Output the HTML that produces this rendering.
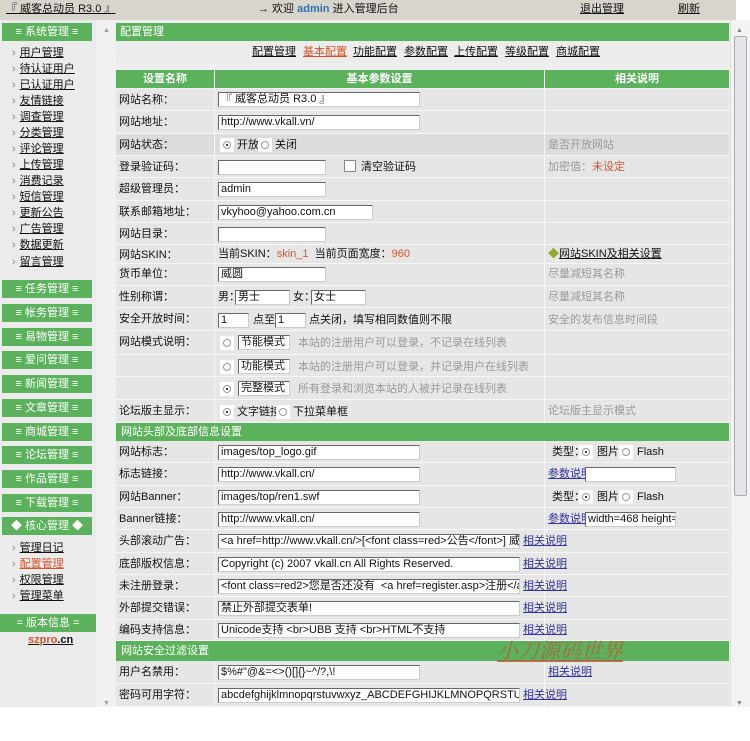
<!DOCTYPE html>
<html><head><meta charset="utf-8">
<style>
*{margin:0;padding:0;box-sizing:border-box}
body{width:750px;height:741px;background:#fff;position:relative;overflow:hidden;font:11px/13px "Liberation Sans","WenQuanYi Zen Hei","Noto Sans CJK SC",sans-serif;color:#111}
.a{position:absolute;white-space:nowrap;line-height:13px}
.u{text-decoration:underline}
.g{background:#5cb15c;color:#fff}
.sh{position:absolute;left:2px;width:90px;height:18px;line-height:18px;text-align:center;color:#fff;background:#5cb15c;font-size:11px}
.sl{position:absolute;left:12px;line-height:14px;font-size:11px}
.sl:before{content:"›";color:#888;margin-right:4px}
.sl span{text-decoration:underline}
.row{position:absolute;left:116px;width:613px;background:#e6e6e6;border-bottom:1px solid #f6f6f6}
.row .c1,.row .c2{position:absolute;top:0;bottom:0;border-right:1px solid #f6f6f6}
.row .c1{left:0;width:99px}
.row .c2{left:99px;width:330px}
.lb{position:absolute;left:3px;line-height:20px;font-size:11px;white-space:nowrap}
.in{position:absolute;height:15px;background:#fff;border:1px solid;border-color:#666 #ccc #ccc #666;font-size:11px;line-height:13px;padding-left:2px;white-space:nowrap;overflow:hidden}
.rd{position:absolute;width:14px;height:14px;background:#fff;}
.rd i{position:absolute;left:3px;top:3px;width:8px;height:8px;border-radius:50%;border:1px solid #999;}
.rd.on i:after{content:"";position:absolute;left:2px;top:2px;width:2px;height:2px;background:#000;border-radius:50%}
.gr{color:#999}
.lk{color:#33339a;text-decoration:underline}
.red{color:#d9532b}
</style></head><body>
<div class="a" style="left:0;top:0;width:736px;height:20px;background:#d8d5cd"></div>
<div class="a u" style="left:6px;top:3px">『 威客总动员 R3.0 』</div>
<div class="a" style="left:258px;top:3px">→ 欢迎 <b style="color:#2f6fb3">admin</b> 进入管理后台</div>
<div class="a u" style="left:580px;top:3px">退出管理</div>
<div class="a u" style="left:678px;top:3px">刷新</div>
<div class="a" style="left:0;top:20px;width:96px;height:687px;background:#ebebeb"></div>
<div class="a" style="left:96px;top:20px;width:19px;height:687px;background:#f1f1f1"></div>
<div class="a" style="left:103px;top:24px;color:#999;font-size:7px">▲</div>
<div class="a" style="left:103px;top:697px;color:#999;font-size:7px">▼</div>
<div class="sh" style="top:23px">≡ 系统管理 ≡</div>
<div class="sl" style="top:46px"><span>用户管理</span></div>
<div class="sl" style="top:62px"><span>待认证用户</span></div>
<div class="sl" style="top:78px"><span>已认证用户</span></div>
<div class="sl" style="top:94px"><span>友情链接</span></div>
<div class="sl" style="top:110px"><span>调查管理</span></div>
<div class="sl" style="top:126px"><span>分类管理</span></div>
<div class="sl" style="top:142px"><span>评论管理</span></div>
<div class="sl" style="top:158px"><span>上传管理</span></div>
<div class="sl" style="top:174px"><span>消费记录</span></div>
<div class="sl" style="top:190px"><span>短信管理</span></div>
<div class="sl" style="top:206px"><span>更新公告</span></div>
<div class="sl" style="top:222px"><span>广告管理</span></div>
<div class="sl" style="top:238px"><span>数据更新</span></div>
<div class="sl" style="top:255px"><span>留言管理</span></div>
<div class="sh" style="top:280px">≡ 任务管理 ≡</div>
<div class="sh" style="top:304px">≡ 帐务管理 ≡</div>
<div class="sh" style="top:328px">≡ 易物管理 ≡</div>
<div class="sh" style="top:351px">≡ 爱问管理 ≡</div>
<div class="sh" style="top:375px">≡ 新闻管理 ≡</div>
<div class="sh" style="top:399px">≡ 文章管理 ≡</div>
<div class="sh" style="top:423px">≡ 商城管理 ≡</div>
<div class="sh" style="top:446px">≡ 论坛管理 ≡</div>
<div class="sh" style="top:470px">≡ 作品管理 ≡</div>
<div class="sh" style="top:494px">≡ 下载管理 ≡</div>
<div class="sh" style="top:517px">◆ 核心管理 ◆</div>
<div class="sl" style="top:541px"><span>管理日记</span></div>
<div class="sl" style="top:557px"><span class="red">配置管理</span></div>
<div class="sl" style="top:573px"><span>权限管理</span></div>
<div class="sl" style="top:589px"><span>管理菜单</span></div>
<div class="sh" style="top:614px;left:0;width:96px">= 版本信息 =</div>
<div class="a" style="left:28px;top:634px;font-weight:bold;text-decoration:underline"><span class="red">szpro</span>.cn</div>
<div class="a" style="left:115px;top:20px;width:615px;height:687px;background:#efefef"></div>
<div class="a g" style="left:116px;top:23px;width:613px;height:18px;line-height:18px;padding-left:4px">配置管理</div>
<div class="a" style="left:116px;top:41px;width:613px;height:22px;background:#ececec"></div>
<div class="a u" style="left:252px;top:46px">配置管理</div>
<div class="a u red" style="left:303px;top:46px">基本配置</div>
<div class="a u" style="left:353px;top:46px">功能配置</div>
<div class="a u" style="left:404px;top:46px">参数配置</div>
<div class="a u" style="left:454px;top:46px">上传配置</div>
<div class="a u" style="left:505px;top:46px">等级配置</div>
<div class="a u" style="left:556px;top:46px">商城配置</div>
<div class="a g" style="left:116px;top:70px;width:98px;height:18px;line-height:18px;text-align:center;font-weight:bold">设置名称</div>
<div class="a g" style="left:215px;top:70px;width:329px;height:18px;line-height:18px;text-align:center;font-weight:bold">基本参数设置</div>
<div class="a g" style="left:545px;top:70px;width:184px;height:18px;line-height:18px;text-align:center;font-weight:bold">相关说明</div>

<div class="row" style="top:89px;height:22px"><div class="c1"></div><div class="c2"></div><div class="lb" style="top:1px">网站名称：</div><div class="in" style="left:102px;top:3px;width:202px">『 威客总动员 R3.0 』</div></div>
<div class="row" style="top:111px;height:23px"><div class="c1"></div><div class="c2"></div><div class="lb" style="top:1px">网站地址：</div><div class="in" style="left:102px;top:4px;width:202px">http://www.vkall.vn/</div></div>
<div class="row" style="top:134px;height:22px;background:#dcdcdc"><div class="c1"></div><div class="c2"></div><div class="lb" style="top:1px">网站状态：</div><div class="rd on" style="left:104px;top:4px"><i></i></div><div class="a" style="left:121px;top:5px">开放</div><div class="rd" style="left:142px;top:4px"><i></i></div><div class="a" style="left:159px;top:5px">关闭</div><div class="a gr" style="left:432px;top:5px">是否开放网站</div></div>
<div class="row" style="top:156px;height:22px"><div class="c1"></div><div class="c2"></div><div class="lb" style="top:1px">登录验证码：</div><div class="in" style="left:102px;top:4px;width:108px"></div><div class="a" style="left:228px;top:4px;width:12px;height:12px;background:#fff;border:1px solid #888"></div><div class="a" style="left:245px;top:5px">清空验证码</div><div class="a gr" style="left:432px;top:5px">加密值：<span class="red">未设定</span></div></div>
<div class="row" style="top:178px;height:23px"><div class="c1"></div><div class="c2"></div><div class="lb" style="top:1px">超级管理员：</div><div class="in" style="left:102px;top:4px;width:108px">admin</div></div>
<div class="row" style="top:201px;height:22px"><div class="c1"></div><div class="c2"></div><div class="lb" style="top:1px">联系邮箱地址：</div><div class="in" style="left:102px;top:4px;width:155px">vkyhoo@yahoo.com.cn</div></div>
<div class="row" style="top:223px;height:22px"><div class="c1"></div><div class="c2"></div><div class="lb" style="top:1px">网站目录：</div><div class="in" style="left:102px;top:4px;width:108px"></div></div>
<div class="row" style="top:245px;height:19px"><div class="c1"></div><div class="c2"></div><div class="lb" style="top:0">网站SKIN：</div><div class="a" style="left:102px;top:3px">当前SKIN：<span class="red">skin_1</span>&nbsp; 当前页面宽度：<span class="red">960</span></div><div class="a" style="left:432px;top:3px"><span style="color:#9a3">◆</span><span class="u">网站SKIN及相关设置</span></div></div>
<div class="row" style="top:264px;height:22px"><div class="c1"></div><div class="c2"></div><div class="lb" style="top:0">货币单位：</div><div class="in" style="left:102px;top:3px;width:108px">威圆</div><div class="a gr" style="left:432px;top:4px">尽量减短其名称</div></div>
<div class="row" style="top:286px;height:22px"><div class="c1"></div><div class="c2"></div><div class="lb" style="top:1px">性别称谓：</div><div class="a" style="left:102px;top:5px">男：</div><div class="in" style="left:119px;top:4px;width:55px">男士</div><div class="a" style="left:177px;top:5px">女：</div><div class="in" style="left:195px;top:4px;width:55px">女士</div><div class="a gr" style="left:432px;top:5px">尽量减短其名称</div></div>
<div class="row" style="top:308px;height:23px"><div class="c1"></div><div class="c2"></div><div class="lb" style="top:1px">安全开放时间：</div><div class="in" style="left:102px;top:5px;width:31px">1</div><div class="a" style="left:137px;top:6px">点至</div><div class="in" style="left:159px;top:5px;width:31px">1</div><div class="a" style="left:193px;top:6px">点关闭，填写相同数值则不限</div><div class="a gr" style="left:432px;top:6px">安全的发布信息时间段</div></div>
<div class="row" style="top:331px;height:24px"><div class="c1"></div><div class="c2"></div><div class="lb" style="top:1px">网站模式说明：</div><div class="rd" style="left:104px;top:5px"><i></i></div><div class="in" style="left:122px;top:4px;width:52px">节能模式</div><div class="a gr" style="left:182px;top:6px">本站的注册用户可以登录，不记录在线列表</div></div>
<div class="row" style="top:355px;height:22px"><div class="c1"></div><div class="c2"></div><div class="rd" style="left:104px;top:5px"><i></i></div><div class="in" style="left:122px;top:4px;width:52px">功能模式</div><div class="a gr" style="left:182px;top:6px">本站的注册用户可以登录，并记录用户在线列表</div></div>
<div class="row" style="top:377px;height:23px"><div class="c1"></div><div class="c2"></div><div class="rd on" style="left:104px;top:5px"><i></i></div><div class="in" style="left:122px;top:4px;width:52px">完整模式</div><div class="a gr" style="left:182px;top:6px">所有登录和浏览本站的人被并记录在线列表</div></div>
<div class="row" style="top:400px;height:23px"><div class="c1"></div><div class="c2"></div><div class="lb" style="top:1px">论坛版主显示：</div><div class="rd on" style="left:104px;top:5px"><i></i></div><div class="a" style="left:121px;top:6px">文字链接</div><div class="rd" style="left:160px;top:5px"><i></i></div><div class="a" style="left:177px;top:6px">下拉菜单框</div><div class="a gr" style="left:432px;top:5px">论坛版主显示模式</div></div>
<div class="a g" style="left:116px;top:423px;width:613px;height:18px;line-height:18px;padding-left:5px">网站头部及底部信息设置</div>

<div class="row" style="top:441px;height:22px"><div class="c1"></div><div class="c2"></div><div class="lb" style="top:1px">网站标志：</div><div class="in" style="left:102px;top:4px;width:202px">images/top_logo.gif</div><div class="a" style="left:436px;top:5px">类型：</div><div class="rd on" style="left:463px;top:4px"><i></i></div><div class="a" style="left:481px;top:5px">图片</div><div class="rd" style="left:503px;top:4px"><i></i></div><div class="a" style="left:521px;top:5px">Flash</div></div>
<div class="row" style="top:463px;height:23px"><div class="c1"></div><div class="c2"></div><div class="lb" style="top:1px">标志链接：</div><div class="in" style="left:102px;top:4px;width:202px">http://www.vkall.cn/</div><div class="a lk" style="left:432px;top:5px">参数说明</div><div class="in" style="left:469px;top:4px;width:91px"></div></div>
<div class="row" style="top:486px;height:22px"><div class="c1"></div><div class="c2"></div><div class="lb" style="top:1px">网站Banner：</div><div class="in" style="left:102px;top:4px;width:202px">images/top/ren1.swf</div><div class="a" style="left:436px;top:5px">类型：</div><div class="rd on" style="left:463px;top:4px"><i></i></div><div class="a" style="left:481px;top:5px">图片</div><div class="rd" style="left:503px;top:4px"><i></i></div><div class="a" style="left:521px;top:5px">Flash</div></div>
<div class="row" style="top:508px;height:22px"><div class="c1"></div><div class="c2"></div><div class="lb" style="top:1px">Banner链接：</div><div class="in" style="left:102px;top:4px;width:202px">http://www.vkall.cn/</div><div class="a lk" style="left:432px;top:5px">参数说明</div><div class="in" style="left:469px;top:4px;width:91px">width=468 height=60</div></div>
<div class="row" style="top:530px;height:23px"><div class="c1"></div><div class="c2"></div><div class="lb" style="top:1px">头部滚动广告：</div><div class="in" style="left:102px;top:4px;width:302px">&lt;a href=http://www.vkall.cn/&gt;[&lt;font class=red&gt;公告&lt;/font&gt;] 威客</div><div class="a lk" style="left:407px;top:5px">相关说明</div></div>
<div class="row" style="top:553px;height:22px"><div class="c1"></div><div class="c2"></div><div class="lb" style="top:1px">底部版权信息：</div><div class="in" style="left:102px;top:4px;width:302px">Copyright (c) 2007 vkall.cn All Rights Reserved.</div><div class="a lk" style="left:407px;top:5px">相关说明</div></div>
<div class="row" style="top:575px;height:22px"><div class="c1"></div><div class="c2"></div><div class="lb" style="top:1px">未注册登录：</div><div class="in" style="left:102px;top:4px;width:302px">&lt;font class=red2&gt;您是否还没有 &nbsp;&lt;a href=register.asp&gt;注册&lt;/a&gt;</div><div class="a lk" style="left:407px;top:5px">相关说明</div></div>
<div class="row" style="top:597px;height:23px"><div class="c1"></div><div class="c2"></div><div class="lb" style="top:1px">外部提交错误：</div><div class="in" style="left:102px;top:4px;width:302px">禁止外部提交表单!</div><div class="a lk" style="left:407px;top:5px">相关说明</div></div>
<div class="row" style="top:620px;height:21px"><div class="c1"></div><div class="c2"></div><div class="lb" style="top:0">编码支持信息：</div><div class="in" style="left:102px;top:3px;width:302px">Unicode支持 &lt;br&gt;UBB 支持 &lt;br&gt;HTML不支持</div><div class="a lk" style="left:407px;top:4px">相关说明</div></div>
<div class="a g" style="left:116px;top:641px;width:613px;height:20px;line-height:20px;padding-left:5px">网站安全过滤设置</div>
<div class="row" style="top:661px;height:23px"><div class="c1"></div><div class="c2"></div><div class="lb" style="top:1px">用户名禁用：</div><div class="in" style="left:102px;top:4px;width:202px">$%#"@&amp;=&lt;&gt;()[]{}~^/?,\!</div><div class="a lk" style="left:432px;top:5px">相关说明</div></div>
<div class="row" style="top:684px;height:23px"><div class="c1"></div><div class="c2"></div><div class="lb" style="top:1px">密码可用字符：</div><div class="in" style="left:102px;top:4px;width:302px">abcdefghijklmnopqrstuvwxyz_ABCDEFGHIJKLMNOPQRSTUVWXYZ</div><div class="a lk" style="left:407px;top:5px">相关说明</div></div>
<div class="a" style="left:497px;top:638px;font:italic 21px/24px 'Noto Serif CJK SC','WenQuanYi Zen Hei',serif;color:#b0603a;opacity:.85;text-decoration:underline">小刀源码世界</div>
<div class="a" style="left:730px;top:20px;width:20px;height:687px;background:#f3f3f3;border-left:1px solid #ddd"></div>
<div class="a" style="left:734px;top:36px;width:13px;height:460px;background:#e4e4ea;border:1px solid #aaa;border-radius:2px"></div>
<div class="a" style="left:736px;top:24px;color:#888;font-size:7px">▲</div>
<div class="a" style="left:736px;top:697px;color:#888;font-size:7px">▼</div>
</body></html>
